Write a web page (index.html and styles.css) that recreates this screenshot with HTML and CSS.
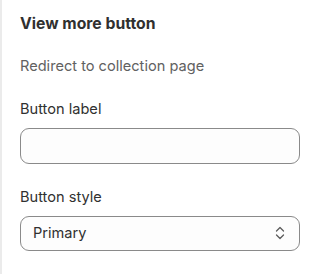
FILE: index.html
```html
<!DOCTYPE html>
<html>
<head>
<meta charset="utf-8">
<link rel="stylesheet" href="styles.css">
</head>
<body>
<div class="panel">
  <h2 class="title">View more button</h2>
  <p class="desc">Redirect to collection page</p>
  <div class="field">
    <label class="label">Button label</label>
    <div class="input"></div>
  </div>
  <div class="field">
    <label class="label">Button style</label>
    <div class="select">
      <span>Primary</span>
      <svg class="chev" width="12" height="18" viewBox="0 0 12 18"><path d="M2.5 7 L6 3.5 L9.5 7 M2.5 11 L6 14.5 L9.5 11" fill="none" stroke="#5c5c5c" stroke-width="1.3" stroke-linecap="round" stroke-linejoin="round"/></svg>
    </div>
  </div>
</div>
</body>
</html>
```
FILE: styles.css
```css
html, body { margin: 0; padding: 0; background: #fff; }
body { font-family: Inter, "Noto Sans", sans-serif; color: #303030; }
.panel {
  border-left: 2px solid #ebebeb;
  height: 274px;
  box-sizing: border-box;
  padding: 13px 17px 0 18px;
}
.title { margin: 0; font-size: 15.75px; line-height: 22px; font-weight: 650; color: #303030; }
.desc { margin: 20px 0 0; font-size: 14.6px; line-height: 22px; color: #616161; }
.field { display: flex; flex-direction: column; gap: 8px; margin-top: 21px; }
.field + .field { margin-top: 22px; }
.label { font-size: 14.6px; line-height: 22px; color: #303030; }
.input {
  height: 36px; box-sizing: border-box;
  border: 1px solid #8a8a8a; border-radius: 9px; background: #fdfdfd;
}
.select {
  height: 35px; box-sizing: border-box;
  border: 1px solid #8a8a8a; border-radius: 9px; background: #fdfdfd;
  display: flex; align-items: center; justify-content: space-between;
  padding: 0 13px 2px 12px; font-size: 14.6px;
}
.chev { display: block; }
```
